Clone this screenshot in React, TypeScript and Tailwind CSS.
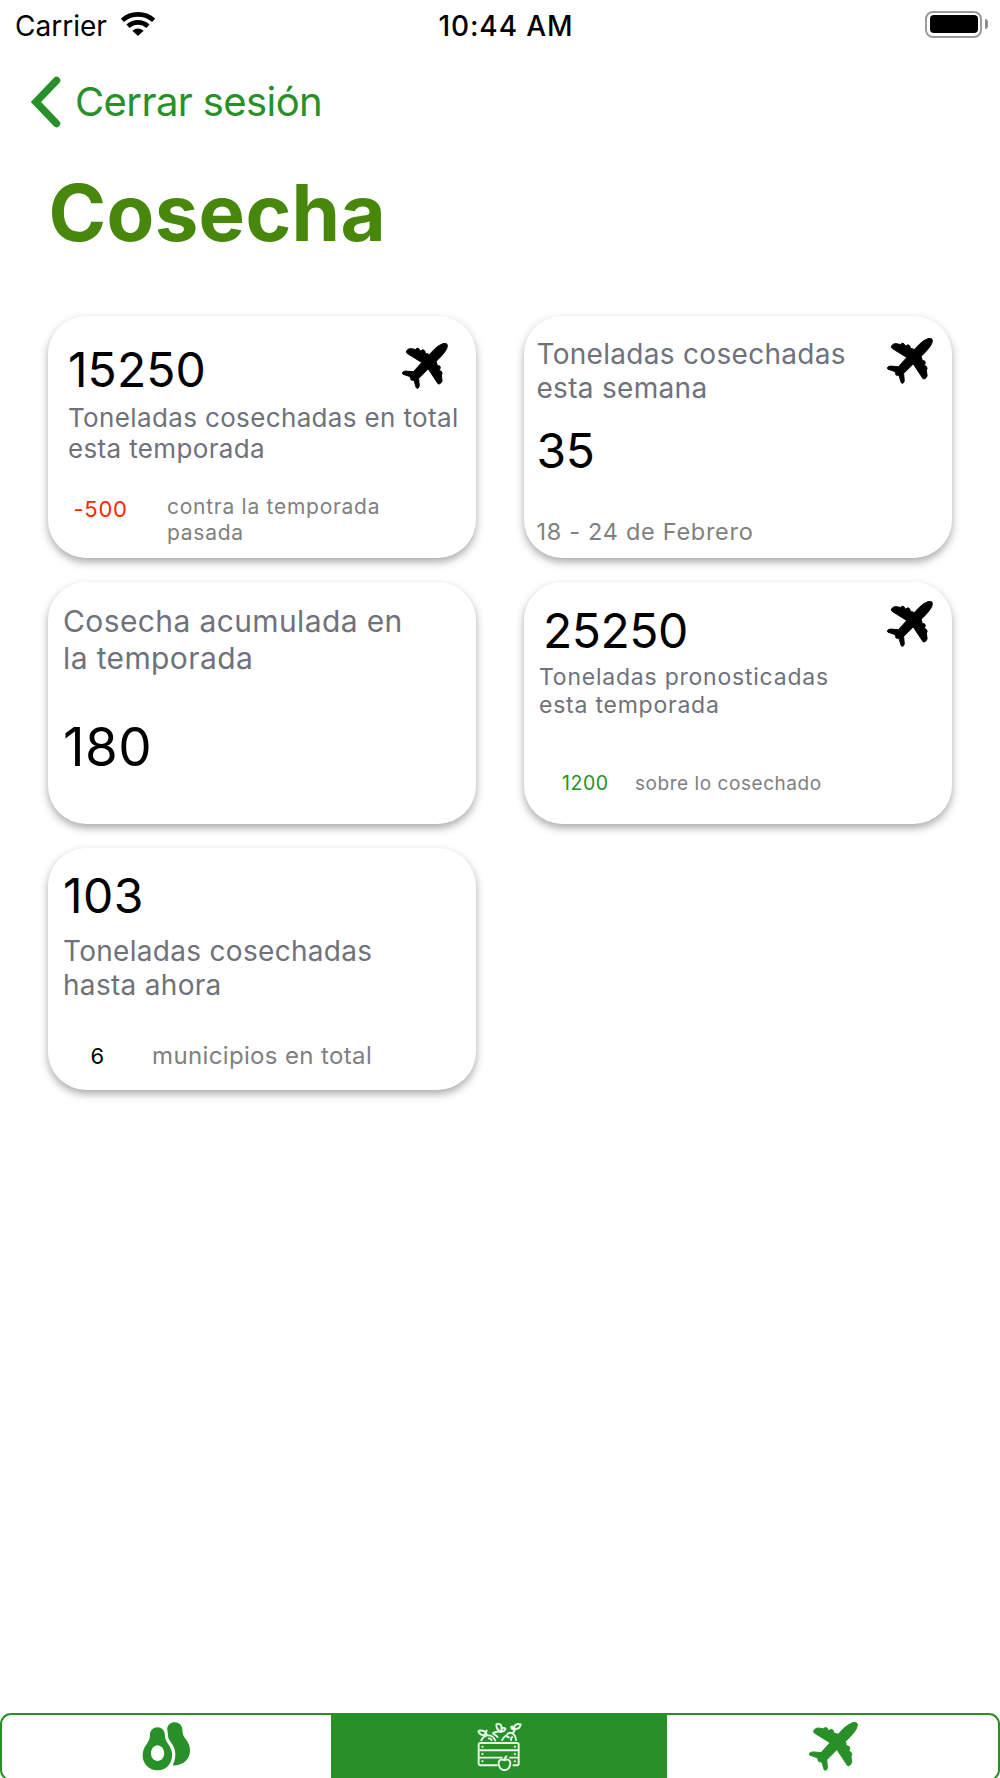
import React from 'react';

interface IconProps {
  className?: string;
}

/** Airplane silhouette, nose pointing to the upper right. */
function PlaneIcon({ className }: IconProps) {
  return (
    <svg
      viewBox="-1 -1 149 149"
      fill="currentColor"
      stroke="currentColor"
      strokeWidth="3"
      strokeLinejoin="round"
      className={className}
      aria-hidden="true"
    >
      <path d="M144 2Q148 6 144 17Q139 29 124 44L110 58L112 68Q114 72 117 72Q124 73 123 80Q120 84 121 88Q129 90 129 98Q126 103 127 106L129 122Q125 131 119 132Q115 132 113 127L84 83L53 114L55 138Q53 146 49 146Q45 146 44 141L39 124Q36 118 32 120Q26 120 27 114Q26 109 22 107L2 100Q-2 95 3 92Q6 90 12 90L36 92L63 62L16 33Q11 29 14 24Q20 17 27 17L43 20Q46 15 51 16Q57 18 57 24L61 25Q64 19 70 22Q75 26 74 32L88 36L104 19Q119 5 132 1Q140 -1 144 2Z" />
    </svg>
  );
}

/** Whole avocado tucked behind a halved one. */
function AvocadoIcon({ className }: IconProps) {
  return (
    <svg viewBox="66 66 146 148" fill="currentColor" className={className} aria-hidden="true">
      <path
        fillRule="evenodd"
        d="M112 82C124 82 133 91 134 104C134 116 137 122 145 134C152 144 156 154 156 165C156 192 138 212 112 212C86 212 67 192 67 167C67 154 71 143 79 133C87 122 89 116 89 104C90 91 99 82 112 82ZM112 136C101 136 92 147 92 160C92 174 101 184 112 184C123 184 132 174 132 160C132 147 123 136 112 136Z"
      />
      <path d="M141 87C142 75 152 67 163 67C177 67 187 76 187 91C187 102 190 109 198 119C206 130 210 139 210 152C210 179 189 198 158 197C165 183 168 166 164 150C161 136 150 126 146 117C142 110 144 98 141 87Z" />
    </svg>
  );
}

/** Crate filled with vegetables, with an apple in front. */
function CrateIcon({ className }: IconProps) {
  return (
    <svg
      viewBox="50 65 136 150"
      fill="none"
      stroke="currentColor"
      strokeWidth="5.800"
      strokeLinecap="round"
      strokeLinejoin="round"
      className={className}
      aria-hidden="true"
    >
      <path d="M110 195H60Q55 195 55 190V133Q55 128 60 128H171Q176 128 176 133V190Q176 195 171 195H160" />
      <path d="M56 150H175M56 172H125M150 172H175" />
      <path d="M66 139H67M164 139H165M66 161H67M164 161H165M66 183H67M164 183H165" />
      <path d="M133 180Q122 174 117 182Q113 192 119 202Q125 212 133 209Q141 212 147 202Q153 192 149 182Q144 174 133 180ZM133 180Q133 173 139 168" />
      <path d="M63 120Q68 108 80 105Q98 103 105 120M80 105Q78 93 68 91Q57 89 54 93Q59 105 71 104M71 104Q79 96 79 90" />
      <path d="M86 114Q92 114 94 119M98 98Q112 90 123 95M100 101Q108 103 112 110" />
      <path d="M121 93Q106 84 109 71Q121 67 124 79V93M124 84Q133 80 136 85Q133 93 124 93" />
      <path d="M126 119Q132 107 140 104Q146 94 154 98Q166 101 168 119M139 107L146 111M153 119Q152 112 156 110" />
      <path d="M157 98Q164 94 164 85Q178 88 182 72Q168 67 163 77V85Q157 74 153 80Q154 87 163 87" />
    </svg>
  );
}

function WifiIcon({ className }: IconProps) {
  return (
    <svg viewBox="0 0 102 72" className={className} aria-hidden="true">
      <g fill="none" stroke="currentColor" strokeWidth="14">
        <path d="M4 25Q24 7 51 7T98 25" />
        <path d="M21 43Q34 31 51 31T81 43" />
      </g>
      <path fill="currentColor" d="M34 56Q51 43 68 56L51 72Z" />
    </svg>
  );
}

function StatusBar() {
  return (
    <header className="grid h-[50px] grid-cols-3 items-center pl-[15px] pr-[12px] text-[28px] leading-[52px]">
      <div className="flex items-center gap-[14px]">
        <span>Carrier</span>
        <WifiIcon className="-mt-[5px] h-6 w-[34px]" />
      </div>
      <span className="pl-[9px] text-center font-medium tracking-[0.9px]">10:44 AM</span>
      <div className="-mt-[4px] flex items-center justify-end gap-[3px]">
        <div className="h-[27px] w-[57px] rounded-[8px] border-2 border-[#9b9b9b] p-[2.5px]">
          <div className="h-full rounded-[4px] bg-black" />
        </div>
        <div className="h-[10px] w-[3px] rounded-r-full bg-[#8e8e8e]" />
      </div>
    </header>
  );
}

interface CardProps {
  children: React.ReactNode;
  className: string;
}

function Card({ children, className }: CardProps) {
  return (
    <article
      className={`h-[242px] rounded-[38px] bg-white shadow-[0_4px_9px_rgba(0,0,0,0.34)] ${className}`}
    >
      {children}
    </article>
  );
}

function HarvestCards() {
  return (
    <section className="mt-[57px] grid grid-cols-2 gap-x-12 gap-y-6 px-12 text-[#6f717b]">
      <Card className="pl-[20px] pt-[25px]">
        <div className="flex justify-between pr-[28px]">
          <p className="text-[48px] leading-[58px] tracking-[0.1px] text-black">15250</p>
          <PlaneIcon className="mt-[2px] size-[46px] text-black" />
        </div>
        <p className="mt-[3px] whitespace-nowrap text-[26px] leading-[31px] tracking-[0.36px]">
          Toneladas cosechadas en total
          <br />
          esta temporada
        </p>
        <div className="mt-[31px] flex text-[21px] leading-[26px] tracking-[0.73px]">
          <p className="mt-px w-[99px] pl-[5.5px] text-[22px] text-[#ff2600]">-500</p>
          <p className="-mt-px text-[#808080]">
            contra la temporada
            <br />
            pasada
          </p>
        </div>
      </Card>

      <Card className="pl-[12.5px] pt-[21px]">
        <div className="flex justify-between pr-[19px]">
          <p className="text-[28px] leading-[34px] tracking-[0.3px]">
            Toneladas cosechadas
            <br />
            esta semana
          </p>
          <PlaneIcon className="mt-px size-[46px] text-black" />
        </div>
        <p className="mt-[17px] text-[48px] leading-[58px] tracking-[-0.3px] text-black">35</p>
        <p className="mt-[38px] text-[23.5px] leading-[28px] tracking-[0.7px] text-[#808080]">
          18 - 24 de Febrero
        </p>
      </Card>

      <Card className="pl-[15px] pt-[21px]">
        <p className="text-[30px] leading-[37px] tracking-[0.38px]">
          Cosecha acumulada en
          <br />
          la temporada
        </p>
        <p className="mt-[38px] text-[53px] leading-[64px] tracking-[0.5px] text-black">180</p>
      </Card>

      <Card className="pl-[15px] pt-[20px]">
        <div className="flex justify-between pl-[4px] pr-[19px]">
          <p className="text-[48px] leading-[58px] tracking-[-0.5px] text-black">25250</p>
          <PlaneIcon className="-mt-px size-[46px] text-black" />
        </div>
        <p className="mt-[3px] text-[23px] leading-[28px] tracking-[0.77px]">
          Toneladas pronosticadas
          <br />
          esta temporada
        </p>
        <div className="mt-[53px] flex text-[19px] leading-[24px] tracking-[0.55px]">
          <p className="-mt-px w-[96px] pl-[23px] text-[19.5px] text-[#289028]">1200</p>
          <p className="text-[#808080]">sobre lo cosechado</p>
        </div>
      </Card>

      <Card className="pl-[15px] pt-[20px]">
        <p className="-mt-px text-[48px] leading-[58px] tracking-[0.5px] text-black">103</p>
        <p className="mt-[9px] text-[28px] leading-[34px] tracking-[0.3px]">
          Toneladas cosechadas
          <br />
          hasta ahora
        </p>
        <div className="mt-[40px] flex leading-[28px]">
          <p className="w-[89px] pl-[27.5px] text-[22px] text-black">6</p>
          <p className="text-[24px] tracking-[0.36px] text-[#808080]">municipios en total</p>
        </div>
      </Card>
    </section>
  );
}

function TabBar() {
  return (
    <nav className="mt-auto h-[65px] overflow-hidden">
      <div className="grid h-[68px] grid-cols-[329px_336px_1fr] overflow-hidden rounded-[11px] border-2 border-[#289028] text-[#289028]">
        <button className="flex justify-center pt-[7px]">
          <AvocadoIcon className="h-[49px] w-[49px]" />
        </button>
        <button className="flex justify-center bg-[#289028] pt-[7px] text-[#e9f5e9]">
          <CrateIcon className="h-[50px] w-[45px]" />
        </button>
        <button className="flex justify-center pl-px pt-[7px]">
          <PlaneIcon className="size-[49px]" />
        </button>
      </div>
    </nav>
  );
}

export default function App() {
  return (
    <main className="flex h-[1778px] w-[1000px] flex-col overflow-hidden bg-white font-['Inter',sans-serif] text-black">
      <StatusBar />
      <button className="mt-[26px] flex h-[52px] items-center gap-[14px] pl-[31px] text-[40px] leading-[52px] tracking-[-0.6px] text-[#289028]">
        <svg viewBox="0 0 30 52" className="h-[52px] w-[30px]" fill="none" aria-hidden="true">
          <path
            d="M25.500 4.500L5 26L25.500 47.500"
            stroke="currentColor"
            strokeWidth="7.500"
            strokeLinecap="round"
          />
        </svg>
        <span>Cerrar sesión</span>
      </button>
      <h1 className="mt-[39px] pl-[48.5px] text-[78px] font-bold leading-[92px] tracking-[0.3px] text-[#47870c]">
        Cosecha
      </h1>
      <HarvestCards />
      <TabBar />
    </main>
  );
}
